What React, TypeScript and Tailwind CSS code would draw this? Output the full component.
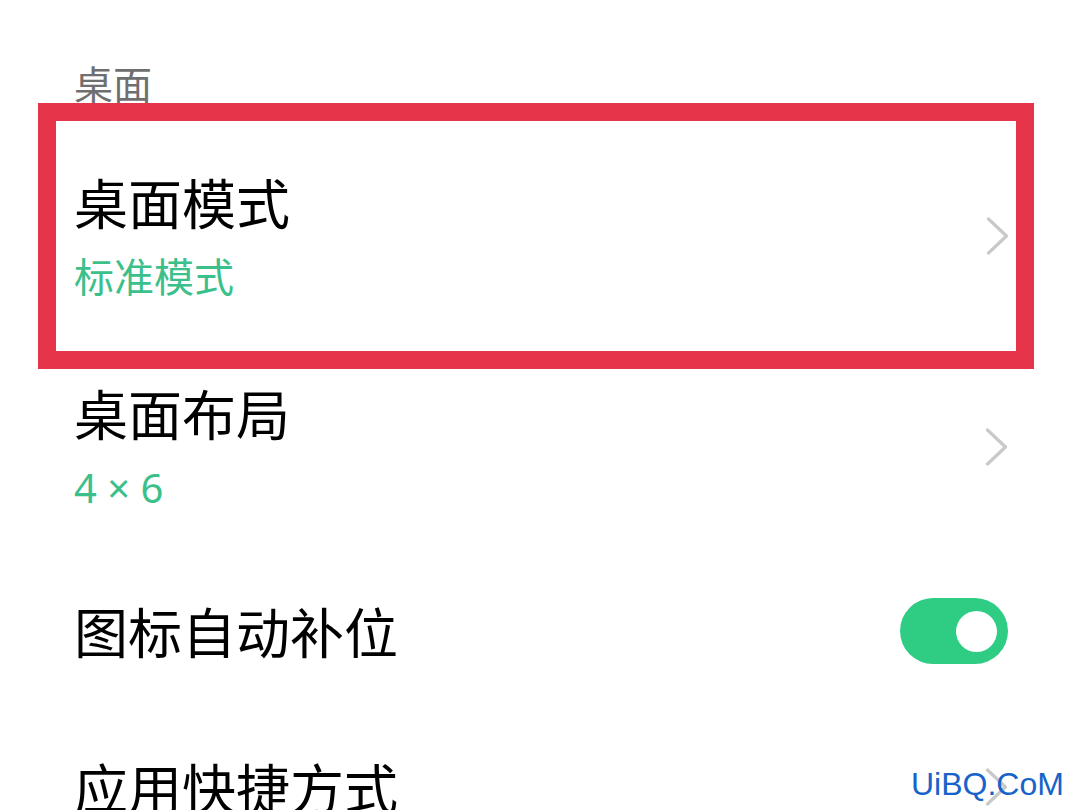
const cjk = { fontFamily: '"Noto Sans CJK SC", "Noto Sans", sans-serif' };
const latinFirst = { fontFamily: '"Noto Sans", "Noto Sans CJK SC", sans-serif' };

function Chevron() {
    return (
        <svg width="23" height="38" viewBox="0 0 23 38" fill="none" className="shrink-0">
            <path d="M2.5 2 L20.5 19 L2.5 36" stroke="#c9c9c9" strokeWidth="3.2" strokeLinecap="round" strokeLinejoin="round" />
        </svg>
    );
}

function Toggle() {
    return (
        <div className="flex h-[66px] w-[108px] shrink-0 items-center justify-end rounded-full bg-[#2fcd83] pr-[11px]">
            <div className="h-[41px] w-[41px] rounded-full bg-white" />
        </div>
    );
}

function RowText({ title, value }: { title: string; value?: string }) {
    return (
        <div className="flex flex-col gap-[28px]">
            <p className="text-[54px] leading-[54px] text-black">{title}</p>
            {value && (
                <p className="text-[40px] leading-[40px] text-[#3cc08b]" style={latinFirst}>
                    {value}
                </p>
            )}
        </div>
    );
}

export default function App() {
    return (
        <div className="relative h-[810px] w-[1080px] overflow-hidden bg-white" style={cjk}>
            <p className="pl-[74px] pt-[63px] text-[39px] leading-[38px] text-[#6f6f6f]">桌面</p>

            {/* highlighted row */}
            <div className="relative z-10 ml-[38px] mt-[2px] flex h-[266px] w-[996px] items-center justify-between border-[18px] border-[#e6354a] pl-[18px] pr-[7px]">
                <RowText title="桌面模式" value="标准模式" />
                <Chevron />
            </div>

            <div className="flex items-center justify-between pl-[74px] pr-[72px] pt-[17px]">
                <RowText title="桌面布局" value="4 × 6" />
                <Chevron />
            </div>

            <div className="mt-[90px] flex h-[66px] items-center justify-between pl-[74px] pr-[72px]">
                <RowText title="图标自动补位" />
                <Toggle />
            </div>

            <div className="mt-[96px] flex items-center justify-between pl-[74px] pr-[72px]">
                <RowText title="应用快捷方式" />
                <Chevron />
            </div>

            <span
                className="absolute left-[911px] top-[766px] text-[32px] leading-[36px] text-[#1763c9]"
                style={{ fontFamily: '"Liberation Sans", Arial, sans-serif' }}
            >
                UiBQ.CoM
            </span>
        </div>
    );
}
